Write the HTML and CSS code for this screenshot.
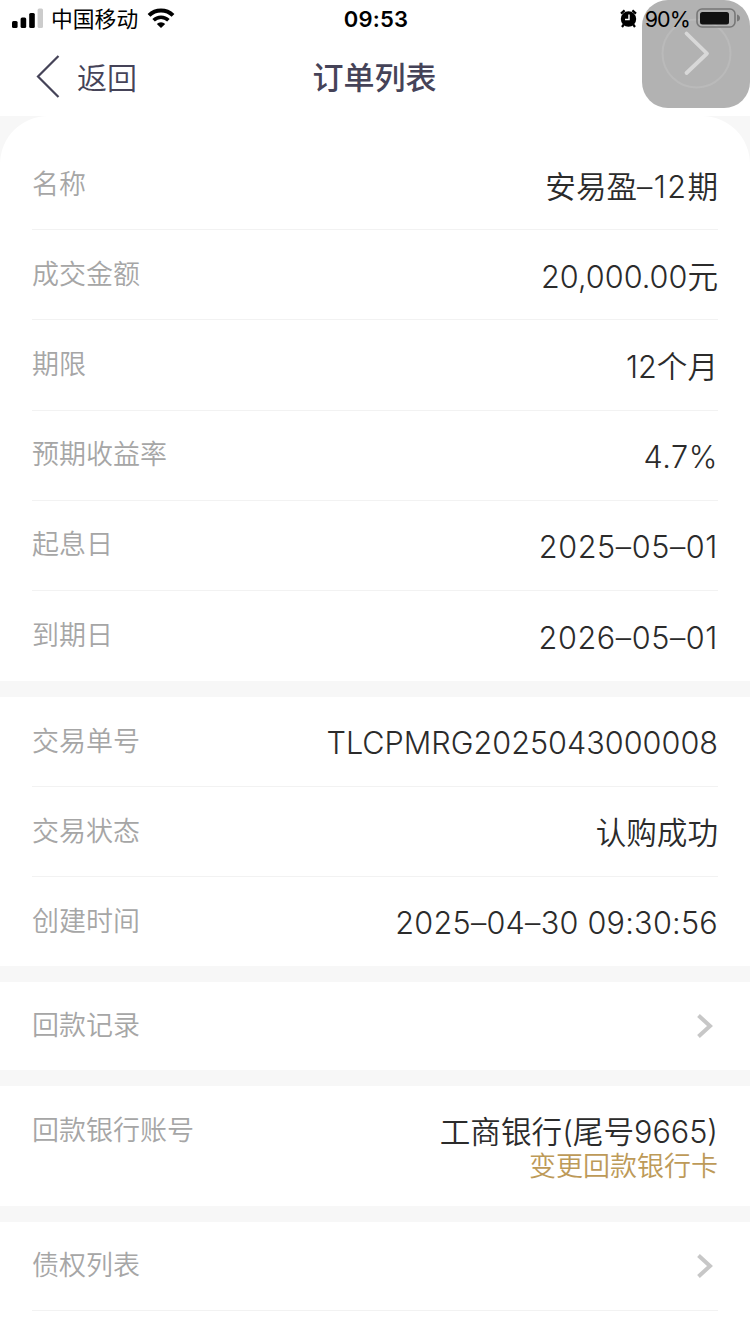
FILE: index.html
```html
<!DOCTYPE html>
<html lang="zh-CN">
<head>
  <meta charset="UTF-8">
  <meta name="viewport" content="width=device-width, initial-scale=1.0">
  <title>订单列表</title>
  <link rel="stylesheet" href="styles.css">
</head>
<body>
  <div class="status-bar">
    <div class="status-left">
      <svg class="signal" width="31" height="20" viewBox="0 0 31 20">
        <rect x="0" y="13" width="5.6" height="7" rx="1.5"/>
        <rect x="8.6" y="9.5" width="5.6" height="10.5" rx="1.5"/>
        <rect x="17.2" y="5" width="5.6" height="15" rx="1.5"/>
        <rect x="25.6" y="0.5" width="5.4" height="19.5" rx="1.5" fill="#ccc"/>
      </svg>
      <span class="carrier">中国移动</span>
      <svg class="wifi" width="28" height="20" viewBox="0 0 28 20" fill="none" stroke="#000">
        <path d="M2 7.4a17.2 17.2 0 0 1 24 0" stroke-width="4"/>
        <path d="M6.6 12.2a10.6 10.6 0 0 1 14.8 0" stroke-width="3.6"/>
        <path d="M14 20l-4.2-4.1a6 6 0 0 1 8.4 0z" fill="#000" stroke="none"/>
      </svg>
    </div>
    <span class="clock">09:53</span>
    <div class="status-right">
      <svg class="alarm" width="17" height="19" viewBox="0 0 17 19">
        <circle cx="8.5" cy="10" r="7.7"/>
        <path d="M1 4.6L4.6 1.4M12.4 1.4L16 4.6M3.8 15.5L2 18M13.2 15.5L15 18" fill="none" stroke="#000" stroke-width="2.2"/>
        <path d="M9 5.5v5H5" fill="none" stroke="#fff" stroke-width="1.5"/>
      </svg>
      <span class="percent">90%</span>
      <svg class="battery" width="44" height="20" viewBox="0 0 44 20">
        <rect x="1" y="1" width="38" height="18" rx="5" fill="none" stroke="#777" stroke-width="1.6"/>
        <rect x="4" y="4" width="29" height="12.5" rx="2.5" fill="#111"/>
        <path d="M41 6.5q3 1 3 3.5t-3 3.5z" fill="#777"/>
      </svg>
    </div>
  </div>

  <div class="navbar">
    <a class="back">
      <svg width="24" height="44" viewBox="0 0 24 44"><path d="M22.5 1L2 21.5 22.5 42"/></svg>
      <span>返回</span>
    </a>
    <h1>订单列表</h1>
  </div>

  <!-- AssistiveTouch button -->
  <div class="assistive">
    <svg width="108" height="108" viewBox="0 0 108 108" fill="none">
      <circle cx="54.5" cy="53.5" r="34" stroke="#bababa" stroke-width="2"/>
      <path d="M44.5 33.5l20.5 20-20.5 19.5" stroke="#d8d8d8" stroke-width="3.8" stroke-linecap="round" stroke-linejoin="round"/>
    </svg>
  </div>

  <div class="content">
    <div class="section first">
      <div class="row"><span class="label">名称</span><span class="value">安易盈<span class="product-no">–12</span>期</span></div>
      <div class="row"><span class="label">成交金额</span><span class="value">20,000.00元</span></div>
      <div class="row"><span class="label">期限</span><span class="value">12个月</span></div>
      <div class="row"><span class="label">预期收益率</span><span class="value rate">4.7%</span></div>
      <div class="row"><span class="label">起息日</span><span class="value date">2025–05–01</span></div>
      <div class="row"><span class="label">到期日</span><span class="value date">2026–05–01</span></div>
    </div>

    <div class="section">
      <div class="row"><span class="label">交易单号</span><span class="value order-no">TLCPMRG2025043000008</span></div>
      <div class="row"><span class="label">交易状态</span><span class="value">认购成功</span></div>
      <div class="row"><span class="label">创建时间</span><span class="value datetime">2025–04–30 09:30:56</span></div>
    </div>

    <div class="section">
      <div class="row link">
        <span class="label">回款记录</span>
        <svg class="arrow" width="16" height="24" viewBox="0 0 16 24"><path d="M1.5 1.5L13 12 1.5 22.5"/></svg>
      </div>
    </div>

    <div class="section">
      <div class="row bank">
        <span class="label">回款银行账号</span>
        <div class="bank-info">
          <span class="value">工商银行(尾号9665)</span>
          <a class="change">变更回款银行卡</a>
        </div>
      </div>
    </div>

    <div class="section last">
      <div class="row link">
        <span class="label">债权列表</span>
        <svg class="arrow" width="16" height="24" viewBox="0 0 16 24"><path d="M1.5 1.5L13 12 1.5 22.5"/></svg>
      </div>
    </div>
  </div>
</body>
</html>
```
FILE: styles.css
```css
:root {
  --nav-color: #454358;
  --text-color: #2b2b2b;
  --label-color: #a6a6a6;
  --line-color: #f2f2f2;
  --band-color: #f7f7f7;
  --gold: #bd9a58;
}

* {
  box-sizing: border-box;
  margin: 0;
  padding: 0;
}

body {
  font-family: Inter, "Noto Sans CJK SC", sans-serif;
  color: var(--text-color);
  background: #fff;
  height: 1333px;
  overflow: hidden;
}

.status-bar {
  position: relative;
  z-index: 2;
  display: grid;
  grid-template-columns: 1fr auto 1fr;
  align-items: center;
  height: 38px;
  padding: 0 10px 0 12px;
  color: #000;
  line-height: 38px;
}

.status-left,
.status-right {
  display: flex;
  align-items: center;
}

.signal {
  margin-top: -2px;
}

.wifi {
  margin-top: -3px;
}

.status-right {
  justify-content: flex-end;
}

.alarm,
.battery {
  margin-top: -2px;
}

.carrier {
  font-size: 21.8px;
  margin: 0 9px 0 8px;
}

.clock {
  font-size: 22px;
  font-weight: 600;
  letter-spacing: 0.2px;
}

.percent {
  font-size: 21.5px;
  letter-spacing: -0.9px;
  margin: 0 6px 0 8px;
}

.navbar {
  display: grid;
  grid-template-columns: 1fr auto 1fr;
  align-items: center;
  height: 78px;
  padding: 0 37px 0 36px;
  color: var(--nav-color);
}

.back {
  display: flex;
  align-items: center;
  gap: 17px;
  font-size: 30px;
  font-weight: 350;
}

.back span {
  margin-top: -3px;
}

.navbar h1 {
  margin-top: -4px;
}

.back path {
  fill: none;
  stroke: var(--nav-color);
  stroke-width: 2.2;
}

.navbar h1 {
  font-size: 31px;
  font-weight: 500;
}

.assistive {
  position: absolute;
  z-index: 1;
  top: 0;
  left: 642px;
  width: 108px;
  height: 108px;
  border-radius: 26px;
  background: #b2b2b2;
}

.content {
  display: flex;
  flex-direction: column;
  gap: 16px;
  background: var(--band-color);
}

.section {
  background: #fff;
  padding: 0 32px;
}

.section.first {
  padding-top: 24px;
  border-radius: 48px 48px 0 0;
}

.row {
  display: flex;
  justify-content: space-between;
  align-items: center;
  height: 90.2px;
  border-bottom: 1px solid var(--line-color);
}

.row:last-child {
  height: 89px;
  border-bottom: none;
}

.first .row:last-child {
  height: 90px;
}

.row.link:last-child {
  height: 88px;
}

.label {
  color: var(--label-color);
  font-size: 27px;
  font-weight: 350;
  line-height: 36px;
}

.value {
  font-size: 30.6px;
  font-weight: 350;
  line-height: 36px;
  padding-top: 2px;
}

.first .value {
  padding-top: 4px;
}

.product-no {
  letter-spacing: 1.4px;
}

.rate {
  letter-spacing: 0.6px;
}

.date {
  letter-spacing: 0.6px;
}

.order-no {
  letter-spacing: 0;
}

.datetime {
  letter-spacing: 0.25px;
}

.arrow {
  margin-right: 5px;
}

.arrow path {
  fill: none;
  stroke: #c7c7c7;
  stroke-width: 4;
}

.row.bank:last-child {
  height: 120px;
  align-items: flex-start;
  padding-top: 26px;
}

.bank .label {
  padding-top: 1px;
}

.bank-info {
  display: flex;
  flex-direction: column;
  align-items: flex-end;
}

.change {
  color: var(--gold);
  font-size: 27px;
  font-weight: 350;
  line-height: 34px;
}

.section.last {
  flex: none;
  height: 120px;
}

.last .row.link {
  height: 88.6px;
  border-bottom: 1px solid var(--line-color);
}
```
